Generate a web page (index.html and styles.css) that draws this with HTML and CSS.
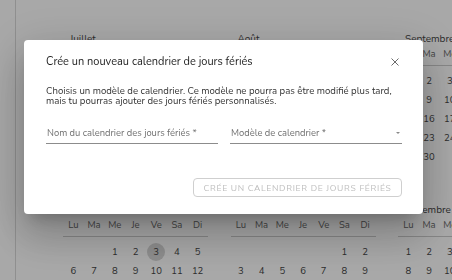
FILE: index.html
```html
<!DOCTYPE html>
<html lang="fr">
<head>
<meta charset="utf-8">
<title>Calendriers</title>
<link rel="stylesheet" href="styles.css">
</head>
<body>
<div class="app">
  <aside class="sidebar"></aside>
  <main class="main">
    <div class="year">
      <section class="month">
        <h3 class="month-title">Juillet</h3>
        <div class="weekdays"><span>Lu</span><span>Ma</span><span>Me</span><span>Je</span><span>Ve</span><span>Sa</span><span>Di</span></div>
        <div class="days"><span class="start-2">1</span><span>2</span><span>3</span><span>4</span><span>5</span><span>6</span><span>7</span><span>8</span><span>9</span><span>10</span><span>11</span><span>12</span><span>13</span><span>14</span><span>15</span><span>16</span><span>17</span><span>18</span><span>19</span><span>20</span><span>21</span><span>22</span><span>23</span><span>24</span><span>25</span><span>26</span><span>27</span><span>28</span><span>29</span><span>30</span><span>31</span></div>
      </section>
      <section class="month">
        <h3 class="month-title">Août</h3>
        <div class="weekdays"><span>Lu</span><span>Ma</span><span>Me</span><span>Je</span><span>Ve</span><span>Sa</span><span>Di</span></div>
        <div class="days"><span class="start-5">1</span><span>2</span><span>3</span><span>4</span><span>5</span><span>6</span><span>7</span><span>8</span><span>9</span><span>10</span><span>11</span><span>12</span><span>13</span><span>14</span><span>15</span><span>16</span><span>17</span><span>18</span><span>19</span><span>20</span><span>21</span><span>22</span><span>23</span><span>24</span><span>25</span><span>26</span><span>27</span><span>28</span><span>29</span><span>30</span><span>31</span></div>
      </section>
      <section class="month">
        <h3 class="month-title">Septembre</h3>
        <div class="weekdays"><span>Lu</span><span>Ma</span><span>Me</span><span>Je</span><span>Ve</span><span>Sa</span><span>Di</span></div>
        <div class="days"><span>1</span><span>2</span><span>3</span><span>4</span><span>5</span><span>6</span><span>7</span><span>8</span><span>9</span><span>10</span><span>11</span><span>12</span><span>13</span><span>14</span><span>15</span><span>16</span><span>17</span><span>18</span><span>19</span><span>20</span><span>21</span><span>22</span><span>23</span><span>24</span><span>25</span><span>26</span><span>27</span><span>28</span><span>29</span><span>30</span></div>
      </section>
      <section class="month">
        <h3 class="month-title">Octobre</h3>
        <div class="weekdays"><span>Lu</span><span>Ma</span><span>Me</span><span>Je</span><span>Ve</span><span>Sa</span><span>Di</span></div>
        <div class="days"><span class="start-3">1</span><span>2</span><span class="today">3</span><span>4</span><span>5</span><span>6</span><span>7</span><span>8</span><span>9</span><span>10</span><span>11</span><span>12</span><span>13</span><span>14</span><span>15</span><span>16</span><span>17</span><span>18</span><span>19</span><span>20</span><span>21</span><span>22</span><span>23</span><span>24</span><span>25</span><span>26</span><span>27</span><span>28</span><span>29</span><span>30</span><span>31</span></div>
      </section>
      <section class="month">
        <h3 class="month-title">Novembre</h3>
        <div class="weekdays"><span>Lu</span><span>Ma</span><span>Me</span><span>Je</span><span>Ve</span><span>Sa</span><span>Di</span></div>
        <div class="days"><span class="start-6">1</span><span>2</span><span>3</span><span>4</span><span>5</span><span>6</span><span>7</span><span>8</span><span>9</span><span>10</span><span>11</span><span>12</span><span>13</span><span>14</span><span>15</span><span>16</span><span>17</span><span>18</span><span>19</span><span>20</span><span>21</span><span>22</span><span>23</span><span>24</span><span>25</span><span>26</span><span>27</span><span>28</span><span>29</span><span>30</span></div>
      </section>
      <section class="month">
        <h3 class="month-title">Décembre</h3>
        <div class="weekdays"><span>Lu</span><span>Ma</span><span>Me</span><span>Je</span><span>Ve</span><span>Sa</span><span>Di</span></div>
        <div class="days"><span>1</span><span>2</span><span>3</span><span>4</span><span>5</span><span>6</span><span>7</span><span>8</span><span>9</span><span>10</span><span>11</span><span>12</span><span>13</span><span>14</span><span>15</span><span>16</span><span>17</span><span>18</span><span>19</span><span>20</span><span>21</span><span>22</span><span>23</span><span>24</span><span>25</span><span>26</span><span>27</span><span>28</span><span>29</span><span>30</span><span>31</span></div>
      </section>
    </div>
  </main>
</div>

<div class="overlay">
  <div class="dialog" role="dialog" aria-labelledby="dlg-title">
    <div class="dialog-header">
      <h2 class="dialog-title" id="dlg-title">Crée un nouveau calendrier de jours fériés</h2>
      <button class="close-btn" aria-label="Fermer">
        <svg width="8" height="8" viewBox="0 0 8 8"><path d="M0.5 0.5L7.5 7.5M7.5 0.5L0.5 7.5" stroke="#6b6b6b" stroke-width="1" fill="none"/></svg>
      </button>
    </div>
    <p class="dialog-text">Choisis un modèle de calendrier. Ce modèle ne pourra pas être modifié plus tard,<br>mais tu pourras ajouter des jours fériés personnalisés.</p>
    <div class="fields">
      <div class="field"><span class="field-label">Nom du calendrier des jours fériés *</span></div>
      <div class="field"><span class="field-label">Modèle de calendrier *</span><span class="caret"></span></div>
    </div>
    <div class="actions">
      <button class="btn-create" disabled>Crée un calendrier de jours fériés</button>
    </div>
  </div>
</div>
</body>
</html>
```

FILE: styles.css
```css
* { box-sizing: border-box; }

html, body {
  margin: 0;
  padding: 0;
  width: 452px;
  height: 280px;
  overflow: hidden;
  background: #ffffff;
  font-family: "Nunito", Lato, "Open Sans", sans-serif;
}

.app {
  display: flex;
  height: 280px;
  overflow: hidden;
}

.sidebar {
  width: 16px;
  flex: none;
  border-right: 1px solid #d9d9d9;
}

.main {
  flex: 1;
  min-width: 0;
  overflow: hidden;
  padding: 31px 0 0 47px;
}

.year {
  display: grid;
  grid-template-columns: repeat(3, 145px);
  column-gap: 22.5px;
  row-gap: 17px;
}

.month-title {
  margin: 0;
  padding-left: 7px;
  font-size: 10px;
  line-height: 16px;
  font-weight: 400;
  color: #444444;
  white-space: nowrap;
}

.weekdays {
  display: grid;
  grid-template-columns: repeat(7, 1fr);
  line-height: 14px;
  padding-bottom: 4px;
  border-bottom: 1px solid #cccccc;
  font-size: 9.5px;
  color: #666666;
  text-align: center;
}

.days {
  display: grid;
  grid-template-columns: repeat(7, 1fr);
  grid-template-rows: repeat(6, 19px);
  padding-top: 5px;
  font-size: 9.5px;
  color: #444444;
  text-align: center;
  align-items: center;
  justify-items: center;
}

.days span {
  width: 18px;
  height: 18px;
  line-height: 18px;
  border-radius: 50%;
}

.days .today { background: #d6d6d6; }

.start-2 { grid-column-start: 2; }
.start-3 { grid-column-start: 3; }
.start-5 { grid-column-start: 5; }
.start-6 { grid-column-start: 6; }

.overlay {
  position: fixed;
  inset: 0;
  background: rgba(0, 0, 0, 0.34);
  padding: 40px 0 0 24px;
}

.dialog {
  width: 399px;
  background: #ffffff;
  border-radius: 4px;
  box-shadow: 0 11px 15px -7px rgba(0,0,0,0.2), 0 24px 38px 3px rgba(0,0,0,0.14), 0 9px 46px 8px rgba(0,0,0,0.12);
  padding: 15px 21px 17px 22px;
  display: flex;
  flex-direction: column;
}

.dialog-header {
  display: flex;
  align-items: center;
  justify-content: space-between;
  height: 14px;
}

.dialog-title {
  margin: 0;
  font-size: 11px;
  line-height: 14px;
  font-weight: 400;
  color: #222222;
}

.close-btn {
  border: 0;
  background: none;
  padding: 0;
  width: 8px;
  height: 8px;
  margin-right: 3px;
  display: flex;
}

.dialog-text {
  margin: 17px 0 0;
  font-size: 9.6px;
  line-height: 10px;
  color: #333333;
}

.fields {
  display: flex;
  gap: 12px;
  margin-top: 20px;
}

.field {
  flex: 1;
  display: flex;
  align-items: center;
  justify-content: space-between;
  height: 18px;
  padding-bottom: 4px;
  border-bottom: 1px solid #8c8c8c;
}

.field-label {
  font-size: 9.4px;
  line-height: 12px;
  color: #707070;
  padding-left: 1px;
}

.caret {
  width: 0;
  height: 0;
  border-left: 2px solid transparent;
  border-right: 2px solid transparent;
  border-top: 2px solid #8a8a8a;
  margin-right: 2px;
}

.actions {
  display: flex;
  justify-content: flex-end;
  margin-top: 34px;
}

.btn-create {
  height: 19px;
  width: 209px;
  padding: 0;
  border: 1px solid #cfcfcf;
  border-radius: 4px;
  background: #ffffff;
  font-family: inherit;
  font-size: 8.6px;
  letter-spacing: 0.7px;
  text-transform: uppercase;
  color: #bdbdbd;
}
```
